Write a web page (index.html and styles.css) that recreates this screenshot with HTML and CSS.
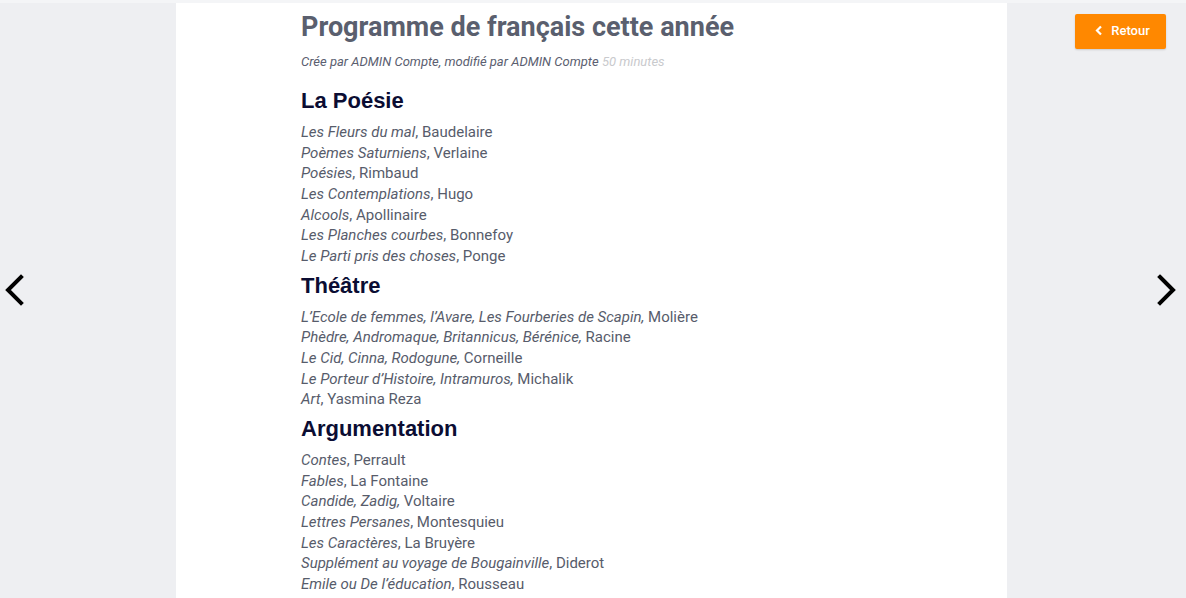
FILE: index.html
```html
<!DOCTYPE html>
<html lang="fr">
<head>
<meta charset="utf-8">
<title>Programme de français cette année</title>
<link rel="stylesheet" href="styles.css">
</head>
<body>
<div class="topline"></div>
<div class="page">
  <div class="side side-left">
    <a class="nav-arrow" href="#" aria-label="Précédent">
      <svg width="22" height="34" viewBox="0 0 22 34"><path d="M18 3 L5 16 L18 29" fill="none" stroke="#000" stroke-width="4" stroke-linecap="square"/></svg>
    </a>
  </div>
  <main class="panel">
    <h1 class="title">Programme de français cette année</h1>
    <p class="meta"><em>Crée par ADMIN Compte, modifié par ADMIN Compte</em> <em class="ago">50 minutes</em></p>

    <h2 class="section">La Poésie</h2>
    <p class="list">
      <em>Les Fleurs du mal</em>, Baudelaire<br>
      <em>Poèmes Saturniens</em>, Verlaine<br>
      <em>Poésies</em>, Rimbaud<br>
      <em>Les Contemplations</em>, Hugo<br>
      <em>Alcools</em>, Apollinaire<br>
      <em>Les Planches courbes</em>, Bonnefoy<br>
      <em>Le Parti pris des choses</em>, Ponge
    </p>

    <h2 class="section">Théâtre</h2>
    <p class="list">
      <em>L’Ecole de femmes, l’Avare, Les Fourberies de Scapin,</em> Molière<br>
      <em>Phèdre, Andromaque, Britannicus, Bérénice,</em> Racine<br>
      <em>Le Cid, Cinna, Rodogune,</em> Corneille<br>
      <em>Le Porteur d’Histoire, Intramuros,</em> Michalik<br>
      <em>Art</em>, Yasmina Reza
    </p>

    <h2 class="section">Argumentation</h2>
    <p class="list">
      <em>Contes</em>, Perrault<br>
      <em>Fables</em>, La Fontaine<br>
      <em>Candide, Zadig,</em> Voltaire<br>
      <em>Lettres Persanes</em>, Montesquieu<br>
      <em>Les Caractères</em>, La Bruyère<br>
      <em>Supplément au voyage de Bougainville</em>, Diderot<br>
      <em>Emile ou De l’éducation</em>, Rousseau
    </p>
  </main>
  <div class="side side-right">
    <div class="actions">
      <a class="btn-back" href="#">
        <svg width="8" height="11" viewBox="0 0 8 11"><path d="M6 1.5 L2 5.5 L6 9.5" fill="none" stroke="#fff" stroke-width="2.2"/></svg>
        <span>Retour</span>
      </a>
    </div>
    <div class="arrow-zone">
      <a class="nav-arrow" href="#" aria-label="Suivant">
        <svg width="22" height="34" viewBox="0 0 22 34"><path d="M4 3 L17 16 L4 29" fill="none" stroke="#000" stroke-width="4" stroke-linecap="square"/></svg>
      </a>
    </div>
  </div>
</div>
</body>
</html>
```

FILE: styles.css
```css
html, body {
  margin: 0;
  padding: 0;
}
body {
  background: #eeeff2;
  font-family: Roboto, "Liberation Sans", Arial, sans-serif;
  height: 598px;
  overflow: hidden;
  position: relative;
}
.topline {
  position: absolute;
  top: 0;
  left: 0;
  right: 0;
  height: 3px;
  background: #f4f5f7;
}
.page {
  display: flex;
  height: 598px;
}
.side {
  display: flex;
}
.side-left {
  width: 176px;
  flex: none;
  align-items: center;
  padding-left: 3px;
  padding-bottom: 17px;
  box-sizing: border-box;
}
.nav-arrow {
  display: block;
  line-height: 0;
}
.panel {
  width: 831px;
  flex: none;
  background: #fff;
  box-sizing: border-box;
  padding: 10px 0 0 125px;
}
.title {
  margin: 0;
  font-family: Roboto, sans-serif;
  font-weight: 700;
  font-size: 27px;
  line-height: 34px;
  color: #5a5f6e;
}
.meta {
  margin: 9px 0 17px;
  font-family: Roboto, sans-serif;
  font-size: 13px;
  line-height: 18px;
  color: #5b6070;
}
.meta em {
  font-style: italic;
}
.meta .ago {
  color: #c9cacd;
}
.section {
  margin: 6px 0 8px;
  font-family: "Liberation Sans", Arial, sans-serif;
  font-weight: 700;
  font-size: 22px;
  line-height: 26px;
  color: #0b0d33;
}
.list {
  margin: 0;
  font-family: Roboto, sans-serif;
  font-size: 15px;
  line-height: 20.67px;
  color: #575c6b;
}
.list em {
  font-style: italic;
}
.side-right {
  flex: 1;
  flex-direction: column;
}
.actions {
  display: flex;
  justify-content: flex-end;
  padding: 14px 20px 0 0;
}
.btn-back {
  display: flex;
  align-items: center;
  justify-content: center;
  gap: 8px;
  width: 91px;
  height: 35px;
  box-sizing: border-box;
  padding-left: 4px;
  padding-bottom: 2px;
  background: #ff8800;
  color: #fff;
  border-radius: 2px;
  box-shadow: 0 1px 2px rgba(0,0,0,0.15);
  text-decoration: none;
  font-size: 13px;
  font-weight: 500;
}
.arrow-zone {
  flex: 1;
  display: flex;
  align-items: center;
  justify-content: flex-end;
  padding-right: 8px;
  padding-bottom: 66px;
}
```
